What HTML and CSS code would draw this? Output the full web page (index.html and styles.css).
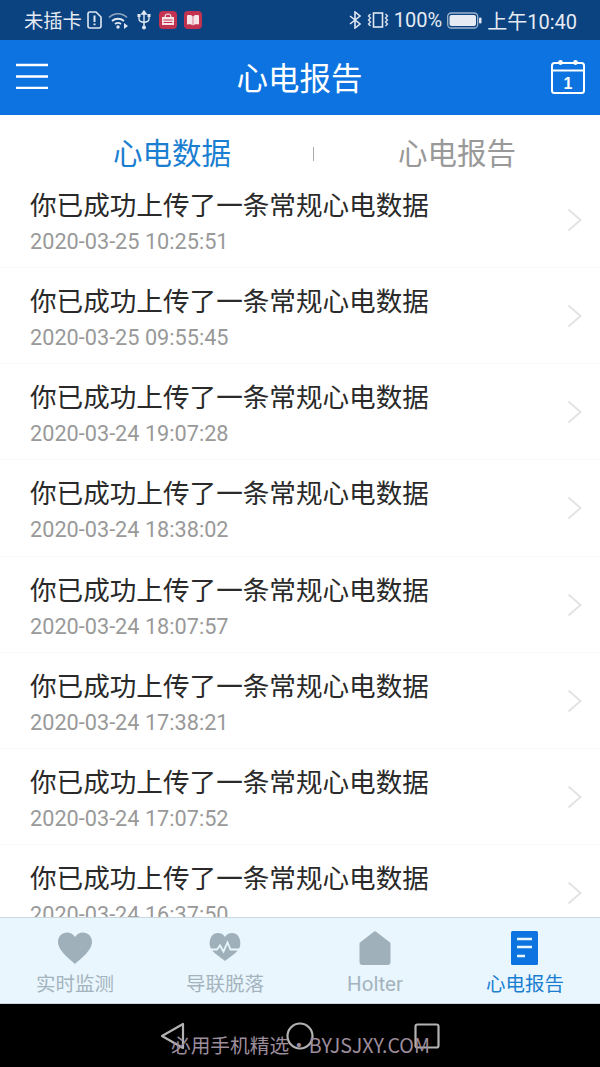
FILE: index.html
```html
<!DOCTYPE html>
<html lang="zh">
	<head>
		<meta charset="utf-8">
		<title>心电报告</title>
		<link rel="stylesheet" href="styles.css">
	</head>
	<body>
		<div class="status-bar">
			<div class="status-group">
				<span class="status-text status-sim">未插卡</span>
				<svg class="ic-sim" width="15" height="18" viewBox="0 0 15 18"><path d="M1 3a2 2 0 0 1 2-2h6l5 5v9a2 2 0 0 1-2 2H3a2 2 0 0 1-2-2z" fill="none" stroke="#dfe8f2" stroke-width="1.6"/><path d="M7.5 4.5v6.5M7.5 12.5v1.8" stroke="#dfe8f2" stroke-width="2"/></svg>
				<svg class="ic-wifi" width="22" height="18" viewBox="0 0 22 18"><path d="M1 6.5C6 1.500 14 1.500 19 6.500" fill="none" stroke="#8fa6c0" stroke-width="1.6"/><path d="M4 10c3.500-3 8.500-3 12 0M7 13c2-1.500 4-1.500 6 0" fill="none" stroke="#dfe8f2" stroke-width="1.8"/><circle cx="10" cy="16" r="1.700" fill="#dfe8f2"/><path d="M16 12l4 3-4 3z" fill="#dfe8f2"/></svg>
				<svg class="ic-usb" width="14" height="20" viewBox="0 0 14 20"><path d="M7 1L4.800 4h4.400zM7 3v15" fill="#dfe8f2" stroke="#dfe8f2" stroke-width="1.400"/><path d="M2 6v3c0 2 1 2.500 5 3.500 4-1 5-1.500 5-3.500V6" fill="none" stroke="#dfe8f2" stroke-width="1.400"/><circle cx="7" cy="17.500" r="2" fill="#dfe8f2"/><rect x="0.500" y="4" width="3" height="3" fill="#dfe8f2"/><rect x="10.500" y="4" width="3" height="3" fill="#dfe8f2"/></svg>
				<svg class="ic-app ic-first" width="18" height="18" viewBox="0 0 18 18"><rect width="18" height="18" rx="4" fill="#c2334f"/><rect x="3" y="6" width="12" height="8" fill="#f6e6ea"/><path d="M6 6c0-4 6-4 6 0" fill="none" stroke="#f6e6ea" stroke-width="1.200"/><path d="M4.500 9h9M4.500 11.500h9" stroke="#c2334f" stroke-width="1"/></svg>
				<svg class="ic-app" width="18" height="18" viewBox="0 0 18 18"><rect width="18" height="18" rx="4" fill="#c2334f"/><path d="M3 4.500c2.500-.8 4.500-.5 5.700 1v9c-1.200-1.300-3.200-1.600-5.700-1zM15 4.500c-2.500-.8-4.500-.5-5.700 1v9c1.200-1.300 3.200-1.600 5.700-1z" fill="#f6e6ea"/></svg>
			</div>
			<div class="status-group">
				<svg class="ic-bt" width="12" height="18" viewBox="0 0 12 18"><path d="M1 5l10 8-5 4V1l5 4-10 8" fill="none" stroke="#dfe8f2" stroke-width="1.600"/></svg>
				<svg class="ic-vib" width="22" height="16" viewBox="0 0 22 16"><rect x="6.500" y="1" width="9" height="14" fill="none" stroke="#dfe8f2" stroke-width="1.600"/><path d="M3.500 2L1.500 4l2 2-2 2 2 2-2 2 2 2M18.500 2l2 2-2 2 2 2-2 2 2 2-2 2" fill="none" stroke="#dfe8f2" stroke-width="1.300"/></svg>
				<span class="status-text status-pct">100%</span>
				<svg class="ic-batt" width="35" height="17" viewBox="0 0 35 17"><rect x="0.700" y="1" width="30" height="15" rx="3.500" fill="none" stroke="#9fb4cb" stroke-width="1.300"/><rect x="2.500" y="3" width="26.500" height="11" rx="2" fill="#e6ebf3"/><rect x="32" y="5.500" width="2.500" height="6" rx="1" fill="#dfe8f2"/></svg>
				<span class="status-text status-time">上午10:40</span>
			</div>
		</div>

		<header class="app-bar">
			<button class="bar-btn" aria-label="menu">
				<svg width="32" height="26" viewBox="0 0 32 26"><path d="M0 2h32M0 13.500h32M0 25h32" stroke="#fff" stroke-width="2.400"/></svg>
			</button>
			<h1>心电报告</h1>
			<button class="bar-btn" aria-label="calendar">
				<svg width="34" height="35" viewBox="0 0 34 35"><rect x="1" y="4" width="32" height="30" rx="2.500" fill="none" stroke="#fff" stroke-width="2"/><path d="M1 11.500h32" stroke="#fff" stroke-width="2"/><circle cx="9.500" cy="3.500" r="2.400" fill="#fff"/><circle cx="24.500" cy="3.500" r="2.400" fill="#fff"/><text x="17" y="29.500" class="cal-num">1</text></svg>
			</button>
		</header>

		<nav class="tabs">
			<span class="tab active">心电数据</span>
			<span class="tab-line"></span>
			<span class="tab">心电报告</span>
		</nav>

		<main class="msg-list">
			<div class="msg">
				<div class="msg-body"><p class="msg-title">你已成功上传了一条常规心电数据</p><p class="msg-date">2020-03-25 10:25:51</p></div>
				<svg class="chev" width="15" height="24" viewBox="0 0 15 24"><path d="M1.500 1.500L13.500 12 1.500 22.500" fill="none" stroke="#e2e2e2" stroke-width="1.800"/></svg>
			</div>
			<div class="msg">
				<div class="msg-body"><p class="msg-title">你已成功上传了一条常规心电数据</p><p class="msg-date">2020-03-25 09:55:45</p></div>
				<svg class="chev" width="15" height="24" viewBox="0 0 15 24"><path d="M1.500 1.500L13.500 12 1.500 22.500" fill="none" stroke="#e2e2e2" stroke-width="1.800"/></svg>
			</div>
			<div class="msg">
				<div class="msg-body"><p class="msg-title">你已成功上传了一条常规心电数据</p><p class="msg-date">2020-03-24 19:07:28</p></div>
				<svg class="chev" width="15" height="24" viewBox="0 0 15 24"><path d="M1.500 1.500L13.500 12 1.500 22.500" fill="none" stroke="#e2e2e2" stroke-width="1.800"/></svg>
			</div>
			<div class="msg">
				<div class="msg-body"><p class="msg-title">你已成功上传了一条常规心电数据</p><p class="msg-date">2020-03-24 18:38:02</p></div>
				<svg class="chev" width="15" height="24" viewBox="0 0 15 24"><path d="M1.500 1.500L13.500 12 1.500 22.500" fill="none" stroke="#e2e2e2" stroke-width="1.800"/></svg>
			</div>
			<div class="msg">
				<div class="msg-body"><p class="msg-title">你已成功上传了一条常规心电数据</p><p class="msg-date">2020-03-24 18:07:57</p></div>
				<svg class="chev" width="15" height="24" viewBox="0 0 15 24"><path d="M1.500 1.500L13.500 12 1.500 22.500" fill="none" stroke="#e2e2e2" stroke-width="1.800"/></svg>
			</div>
			<div class="msg">
				<div class="msg-body"><p class="msg-title">你已成功上传了一条常规心电数据</p><p class="msg-date">2020-03-24 17:38:21</p></div>
				<svg class="chev" width="15" height="24" viewBox="0 0 15 24"><path d="M1.500 1.500L13.500 12 1.500 22.500" fill="none" stroke="#e2e2e2" stroke-width="1.800"/></svg>
			</div>
			<div class="msg">
				<div class="msg-body"><p class="msg-title">你已成功上传了一条常规心电数据</p><p class="msg-date">2020-03-24 17:07:52</p></div>
				<svg class="chev" width="15" height="24" viewBox="0 0 15 24"><path d="M1.500 1.500L13.500 12 1.500 22.500" fill="none" stroke="#e2e2e2" stroke-width="1.800"/></svg>
			</div>
			<div class="msg">
				<div class="msg-body"><p class="msg-title">你已成功上传了一条常规心电数据</p><p class="msg-date">2020-03-24 16:37:50</p></div>
				<svg class="chev" width="15" height="24" viewBox="0 0 15 24"><path d="M1.500 1.500L13.500 12 1.500 22.500" fill="none" stroke="#e2e2e2" stroke-width="1.800"/></svg>
			</div>
		</main>

		<footer class="bottom-nav">
			<div class="nav-item">
				<svg width="36" height="32" viewBox="0 0 36 32"><path d="M18 32C14 28 1 19 1 10 1 4 5.500 0.500 10 0.500c3.500 0 6.500 2 8 4.500 1.500-2.500 4.500-4.500 8-4.500C30.500 0.500 35 4 35 10c0 9-13 18-17 22z" fill="#9fb0bb"/></svg>
				<span>实时监测</span>
			</div>
			<div class="nav-item">
				<svg width="36" height="32" viewBox="0 0 36 32"><path d="M18 29C15 26 5 21 3 14.500 1.500 7 5 1 11 1c3 0 5.500 1.500 7 4 1.500-2.500 4-4 7-4 6 0 9.500 6 8 13.500C31 21 21 26 18 29z" fill="#9fb0bb"/><path d="M0 17.500h10l3-4 3.500 6 4-9 3 7h12.500" fill="none" stroke="#e9f6fe" stroke-width="1.800"/></svg>
				<span>导联脱落</span>
			</div>
			<div class="nav-item">
				<svg width="32" height="34" viewBox="0 0 32 34"><path d="M14.500 1a2 2 0 0 1 3 0L31 11.500a2 2 0 0 1 .5 1.500v18a3 3 0 0 1-3 3h-25a3 3 0 0 1-3-3V13a2 2 0 0 1 .5-1.500z" fill="#9fb0bb"/></svg>
				<span class="latin">Holter</span>
			</div>
			<div class="nav-item active">
				<svg width="28" height="34" viewBox="0 0 28 34"><rect width="27" height="34" rx="1.500" fill="#0c73e0"/><path d="M6 8h15M6 16h15M6 25h8" stroke="#e9f6fe" stroke-width="2.400"/></svg>
				<span>心电报告</span>
			</div>
		</footer>

		<div class="sys-nav">
			<svg width="26" height="28" viewBox="0 0 26 28"><path d="M2 14L23 2v24z" fill="none" stroke="#b3b3b3" stroke-width="2.200" stroke-linejoin="round"/></svg>
			<svg width="28" height="28" viewBox="0 0 28 28"><circle cx="14" cy="14" r="12.500" fill="none" stroke="#b3b3b3" stroke-width="2.200"/></svg>
			<svg width="26" height="26" viewBox="0 0 26 26"><rect x="1.500" y="1.500" width="23" height="23" rx="2" fill="none" stroke="#b3b3b3" stroke-width="2.200"/></svg>
			<span class="watermark">必用手机精选・BYJSJXY.COM</span>
		</div>
	</body>
</html>
```

FILE: styles.css
```css
* {
	box-sizing: border-box;
}
html, body {
	height: 100%;
}
body {
	margin: 0;
	height: 1067px;
	display: flex;
	flex-direction: column;
	overflow: hidden;
	background-color: #fff;
	font-family: Roboto, "Noto Sans CJK SC", sans-serif;
}
p {
	margin: 0;
}

/* status bar */
.status-bar {
	height: 40px;
	flex: none;
	display: flex;
	justify-content: space-between;
	align-items: center;
	padding: 0 23px 0 24px;
	background-color: #0b4280;
}
.status-group {
	display: flex;
	align-items: center;
}
.status-text {
	color: #e6ebf3;
	font-size: 20px;
}
.status-sim {
	font-size: 19.300px;
}
.ic-sim {
	margin-left: 5px;
}
.ic-wifi {
	margin-left: 6px;
}
.ic-usb {
	margin-left: 7px;
}
.ic-app {
	margin-left: 7px;
}
.ic-first {
	margin-left: 8px;
}
.ic-vib {
	margin-left: 6px;
}
.status-pct {
	margin-left: 5px;
}
.ic-batt {
	margin-left: 5px;
}
.status-time {
	margin-left: 5px;
}

/* app bar */
.app-bar {
	height: 75px;
	flex: none;
	display: flex;
	justify-content: space-between;
	align-items: center;
	padding: 0 15px 3px 16px;
	background-color: #0c73e0;
}
.app-bar h1 {
	margin: 0;
	color: #fff;
	font-size: 31.500px;
	font-weight: normal;
}
.bar-btn {
	display: flex;
	padding: 0;
	border: none;
	background: none;
}
.cal-num {
	fill: #fff;
	font-size: 16px;
	font-weight: bold;
	text-anchor: middle;
}

/* tabs */
.tabs {
	height: 57px;
	flex: none;
	display: grid;
	grid-template-columns: 313px 1px 1fr;
	align-items: center;
	padding-top: 20px;
}
.tab {
	text-align: center;
	color: #999;
	font-size: 29.500px;
	line-height: 36px;
}
.tab.active {
	color: #1a7ed1;
	padding-left: 31px;
}
.tab-line {
	height: 14px;
	background-color: #aaa;
}

/* list */
.msg-list {
	flex: 1;
	overflow: hidden;
}
.msg {
	height: 96.150px;
	display: flex;
	justify-content: space-between;
	align-items: flex-start;
	padding: 17px 18px 0 30px;
	border-bottom: 1px solid #fafafa;
}
.msg-title {
	color: #2a2a2a;
	font-size: 26.600px;
	line-height: 34px;
}
.msg-date {
	margin-top: 3px;
	color: #999;
	font-size: 21.700px;
	line-height: 32px;
}
.chev {
	margin-top: 19px;
}

/* bottom nav */
.bottom-nav {
	height: 87px;
	flex: none;
	display: flex;
	padding-top: 13px;
	background-color: #e9f6fe;
	border-top: 1px solid #c9d8e0;
	border-bottom: 1px solid #c9d8e0;
}
.nav-item {
	flex: 1;
	display: flex;
	flex-direction: column;
	align-items: center;
	color: #a4b3bd;
	font-size: 19.500px;
}
.nav-item svg {
	height: 34px;
}
.nav-item span {
	margin-top: 6px;
	line-height: 28px;
}
.nav-item .latin {
	font-size: 20.500px;
	line-height: 26px;
}
.nav-item.active {
	color: #1a7ed1;
}

/* system nav */
.sys-nav {
	height: 63px;
	flex: none;
	position: relative;
	display: flex;
	align-items: center;
	padding: 0 160px 0 160px;
	justify-content: space-between;
	background-color: #000;
}
.watermark {
	position: absolute;
	left: 171px;
	top: 27px;
	color: #9d8d9d;
	font-family: "Noto Sans CJK SC", sans-serif;
	font-size: 19.700px;
	line-height: 28px;
	white-space: nowrap;
}
```
